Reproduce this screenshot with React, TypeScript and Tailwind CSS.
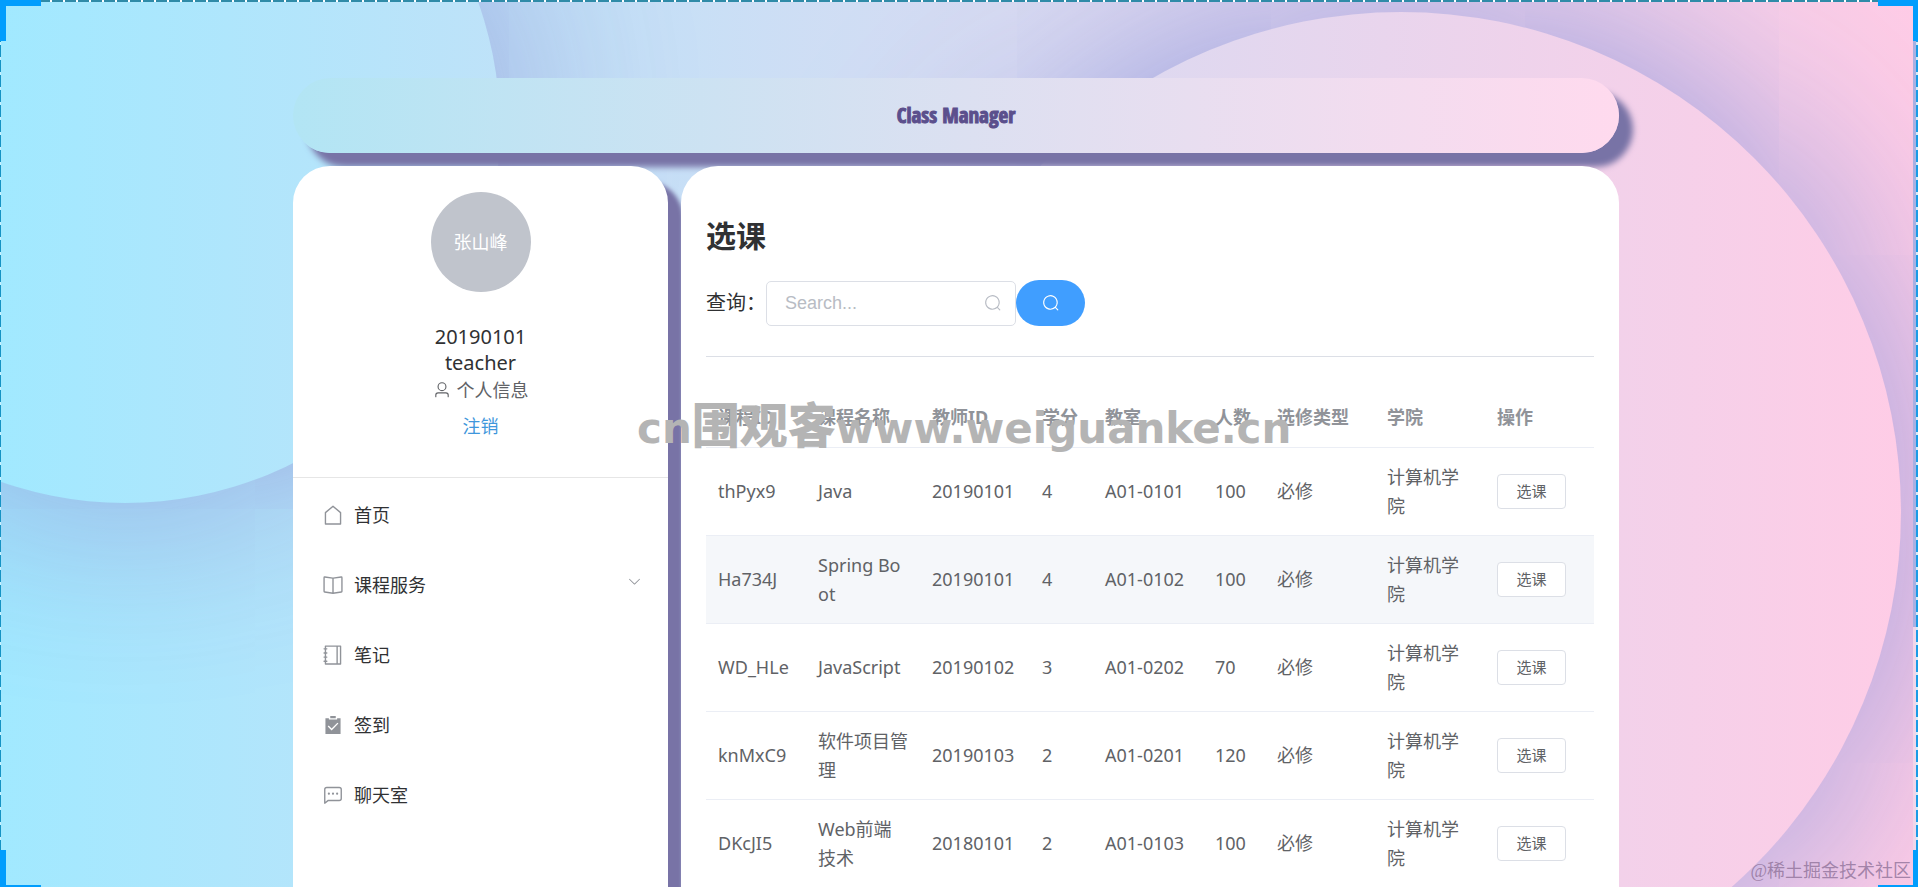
import React from "react";

const SANS = "font-['Noto_Sans','Noto_Sans_CJK_SC',sans-serif]";

const paths = {
  search:
    "M795.904 750.72l124.992 124.928a32 32 0 0 1-45.248 45.248L750.656 795.904a416 416 0 1 1 45.248-45.248zM480 832a352 352 0 1 0 0-704 352 352 0 0 0 0 704z",
  arrow:
    "M831.872 340.864 512 652.672 192.128 340.864a30.592 30.592 0 0 0-42.752 0 29.12 29.12 0 0 0 0 41.6L489.664 714.24a32 32 0 0 0 44.672 0l340.288-331.712a29.12 29.12 0 0 0 0-41.728 30.592 30.592 0 0 0-42.752 0z",
  user: "M512 512a192 192 0 1 0 0-384 192 192 0 0 0 0 384zm0 64a256 256 0 1 1 0-512 256 256 0 0 1 0 512zm320 320v-96a96 96 0 0 0-96-96H288a96 96 0 0 0-96 96v96a32 32 0 1 1-64 0v-96a160 160 0 0 1 160-160h448a160 160 0 0 1 160 160v96a32 32 0 1 1-64 0z",
  house:
    "M192 413.952V896h640V413.952L512 147.328 192 413.952zM139.52 374.4l352-293.312a32 32 0 0 1 40.96 0l352 293.312A32 32 0 0 1 896 398.976V928a32 32 0 0 1-32 32H160a32 32 0 0 1-32-32V398.976a32 32 0 0 1 11.52-24.576z",
  reading:
    "m512 863.36 384-54.848v-638.72L525.568 222.72a96 96 0 0 1-27.136 0L128 169.792v638.72l384 54.848zM137.024 106.432l370.432 52.928a32 32 0 0 0 9.088 0l370.432-52.928A64 64 0 0 1 960 169.792v638.72a64 64 0 0 1-54.976 63.36l-388.48 55.488a32 32 0 0 1-9.088 0l-388.48-55.488A64 64 0 0 1 64 808.512v-638.72a64 64 0 0 1 73.024-63.36zM480 224h64v640h-64z",
  notebook:
    "M192 128v768h640V128H192zm-32-64h704a32 32 0 0 1 32 32v832a32 32 0 0 1-32 32H160a32 32 0 0 1-32-32V96a32 32 0 0 1 32-32z M672 128h64v768h-64z M96 192h128q32 0 32 32t-32 32H96q-32 0-32-32t32-32z M96 384h128q32 0 32 32t-32 32H96q-32 0-32-32t32-32z M96 576h128q32 0 32 32t-32 32H96q-32 0-32-32t32-32z M96 768h128q32 0 32 32t-32 32H96q-32 0-32-32t32-32z",
  list: "M704 192h160v736H160V192h160v64h384v-64zM311.616 537.28l-45.312 45.248L447.36 763.52l316.8-316.8-45.312-45.184L447.36 673.024 311.616 537.28zM384 192V96h256v96H384z",
  chat: "M273.536 736H800a64 64 0 0 0 64-64V256a64 64 0 0 0-64-64H224a64 64 0 0 0-64 64v570.88L273.536 736zM296 800 147.968 918.4A32 32 0 0 1 96 893.44V256a128 128 0 0 1 128-128h576a128 128 0 0 1 128 128v416a128 128 0 0 1-128 128H296z M512 499.2a51.2 51.2 0 1 1 0-102.4 51.2 51.2 0 0 1 0 102.4zm192 0a51.2 51.2 0 1 1 0-102.4 51.2 51.2 0 0 1 0 102.4zm-384 0a51.2 51.2 0 1 1 0-102.4 51.2 51.2 0 0 1 0 102.4z",
};

type IconName = keyof typeof paths;

function Icon({ name, className }: { name: IconName; className: string }) {
  return (
    <svg
      viewBox="0 0 1024 1024"
      fill="currentColor"
      fillRule={name === "list" ? "evenodd" : "nonzero"}
      aria-hidden="true"
      className={`shrink-0 ${className}`}
    >
      <path d={paths[name]} />
    </svg>
  );
}

const menu: { icon: IconName; label: string; open?: boolean }[] = [
  { icon: "house", label: "首页" },
  { icon: "reading", label: "课程服务", open: true },
  { icon: "notebook", label: "笔记" },
  { icon: "list", label: "签到" },
  { icon: "chat", label: "聊天室" },
];

const columns = ["课程ID", "课程名称", "教师ID", "学分", "教室", "人数", "选修类型", "学院", "操作"];

const courses = [
  ["thPyx9", "Java", "20190101", "4", "A01-0101", "100", "必修", "计算机学院"],
  ["Ha734J", "Spring Boot", "20190101", "4", "A01-0102", "100", "必修", "计算机学院"],
  ["WD_HLe", "JavaScript", "20190102", "3", "A01-0202", "70", "必修", "计算机学院"],
  ["knMxC9", "软件项目管理", "20190103", "2", "A01-0201", "120", "必修", "计算机学院"],
  ["DKcJI5", "Web前端技术", "20180101", "2", "A01-0103", "100", "必修", "计算机学院"],
];

function Backdrop() {
  return (
    <div aria-hidden="true" className="absolute inset-0 overflow-hidden">
      <div className="absolute -left-[250px] -top-[247px] size-[750px] rounded-full shadow-[0_0_190px_rgba(146,150,214,0.9)]" />
      <div className="absolute -right-[-17px] top-[12px] size-[1000px] rounded-full shadow-[0_0_190px_rgba(140,150,220,0.9)]" />
    </div>
  );
}

function Frame() {
  return (
    <div aria-hidden="true" className="pointer-events-none absolute inset-0">
      <div className="absolute inset-x-0 top-0 h-[2px] bg-[repeating-linear-gradient(90deg,#2f8ba8_0_11px,#ffffff_11px_13px)]" />
      <div className="absolute inset-y-0 left-0 w-px bg-[repeating-linear-gradient(180deg,#1593c4_0_12px,#c8f2ff_12px_15px)]" />
      <div className="absolute inset-y-0 right-0 w-[5px] bg-[#f0d6ea]" />
      <div className="absolute right-0 top-0 h-[627px] w-[5px] bg-[#a9b0e2]" />
      <div className="absolute inset-y-0 right-0 w-[2px] bg-[repeating-linear-gradient(180deg,#1a9be6_0_12px,#d8eaf8_12px_15px)]" />
      <div className="absolute left-0 top-0 h-[41px] w-[41px] border-l-[6px] border-t-[6px] border-[#019dfd]" />
      <div className="absolute right-0 top-0 h-[41px] w-[40px] border-r-[5px] border-t-[6px] border-[#019dfd]" />
      <div className="absolute bottom-0 left-0 h-[37px] w-[41px] border-b-2 border-l-[6px] border-[#019dfd]" />
      <div className="absolute bottom-0 right-0 h-[37px] w-[40px] border-b-2 border-r-[5px] border-[#019dfd]" />
    </div>
  );
}

function Sidebar() {
  return (
    <aside className="w-[375px] shrink-0 rounded-t-[37px] bg-white shadow-[15px_15px_4px_#7873a6]">
      <div className="flex h-[312px] flex-col items-center border-b border-[#e6e6e6] pt-[26px]">
        <div className="flex size-[100px] items-center justify-center rounded-full bg-[#c0c4cc] text-lg text-white">
          张山峰
        </div>
        <div className="mt-8 text-center text-xl leading-[26px] text-[#303133]">
          <p>20190101</p>
          <p>teacher</p>
        </div>
        <a href="#profile" className="flex items-center gap-[6px] text-lg leading-[28px] text-[#606266]">
          <Icon name="user" className="size-[18px]" />
          个人信息
        </a>
        <a href="#logout" className="mt-2 text-lg leading-[28px] text-[#3f97dc]">
          注销
        </a>
      </div>
      <nav className="pt-[2px]">
        {menu.map((item) => (
          <a
            key={item.label}
            href="#menu"
            className="flex h-[70px] items-center gap-[10px] pl-[29px] pr-[26px] text-lg text-[#303133]"
          >
            <Icon name={item.icon} className="size-[22px] text-[#909399]" />
            {item.label}
            {item.open && <Icon name="arrow" className="mb-2 ml-auto size-[15px] text-[#909399]" />}
          </a>
        ))}
      </nav>
    </aside>
  );
}

function CourseTable() {
  return (
    <table className="mt-[30px] w-full table-fixed border-separate border-spacing-0 text-left text-lg leading-[29px] text-[#606266]">
      <colgroup>
        <col className="w-[100px]" />
        <col className="w-[114px]" />
        <col className="w-[110px]" />
        <col className="w-[63px]" />
        <col className="w-[110px]" />
        <col className="w-[62px]" />
        <col className="w-[110px]" />
        <col className="w-[110px]" />
        <col />
      </colgroup>
      <thead>
        <tr>
          {columns.map((c) => (
            <th key={c} scope="col" className="h-[61px] whitespace-nowrap border-b border-[#ebeef5] px-3 font-bold text-[#909399]">
              {c}
            </th>
          ))}
        </tr>
      </thead>
      <tbody>
        {courses.map((row, i) => (
          <tr key={row[0]} className={i === 1 ? "bg-[#f5f7fa]" : "bg-white"}>
            {row.map((cell, j) => (
              <td key={j} className="h-[88px] break-all border-b border-[#ebeef5] px-3">
                {cell}
              </td>
            ))}
            <td className="h-[88px] border-b border-[#ebeef5] px-3">
              <button
                type="button"
                className="block h-[35px] w-[69px] rounded-[4px] border border-[#dcdfe6] bg-white text-[15px] leading-none text-[#606266]"
              >
                选课
              </button>
            </td>
          </tr>
        ))}
      </tbody>
    </table>
  );
}

export default function App() {
  return (
    <div
      className={`relative h-screen overflow-hidden bg-linear-to-r from-[#a1e9ff] to-[#ffcce6] pr-[6px] ${SANS}`}
    >
      <Backdrop />
      <div className="relative mx-auto max-w-[1326px] pt-[78px]">
        <header className="flex h-[75px] items-center justify-center rounded-full bg-linear-to-r from-[#b2e5f4] to-[#ffdaee] shadow-[14px_14px_6px_#7873a6]">
          <h1 className="font-['Impact','Noto_Sans_ExtraCondensed','Noto_Sans_Condensed','Open_Sans_Condensed','Roboto_Condensed','Roboto',sans-serif] text-[21px] font-black text-[#5b4f8c] [-webkit-text-stroke:1px_#5b4f8c]">
            Class Manager
          </h1>
        </header>
        <div className="mt-[13px] flex h-[900px] gap-[13px]">
          <Sidebar />
          <main className="relative min-w-0 flex-1 rounded-t-[37px] bg-white px-[25px] pt-[50px]">
            <h2 className="text-[30px] font-bold leading-10 text-[#303133]">选课</h2>
            <form className="mt-6 flex items-center" onSubmit={(e) => e.preventDefault()}>
              <label htmlFor="query" className="w-[60px] shrink-0 whitespace-nowrap text-xl text-[#303133]">
                查询：
              </label>
              <div className="flex h-[45px] w-[250px] items-center rounded-[5px] border border-[#dcdfe6] pl-[18px] pr-[13px]">
                <input
                  id="query"
                  type="text"
                  placeholder="Search..."
                  className="w-full min-w-0 bg-transparent font-['Liberation_Sans',sans-serif] text-lg outline-none placeholder:text-[#b8bcc4]"
                />
                <Icon name="search" className="size-[18px] text-[#b8bcc4]" />
              </div>
              <button
                type="submit"
                aria-label="搜索"
                className="flex h-[46px] w-[69px] items-center justify-center rounded-full bg-[#409eff] text-white"
              >
                <Icon name="search" className="size-[18px]" />
              </button>
            </form>
            <hr className="mt-[30px] border-[#dcdfe6]" />
            <CourseTable />
          </main>
        </div>
      </div>
      <p className="pointer-events-none absolute left-[637px] top-[398px] flex items-baseline whitespace-nowrap font-['DejaVu_Sans','Noto_Sans_CJK_SC',sans-serif] text-[42px] font-bold leading-[56px] text-[#b4b4b4]">
        cn<span className="text-[48px] font-black">围观客</span>www.weiguanke.cn
      </p>
      <p className="pointer-events-none absolute bottom-[3px] right-[7px] font-['Liberation_Serif','Noto_Sans_CJK_SC',serif] text-lg leading-[26px] text-[#8f7299]/80">
        @稀土掘金技术社区
      </p>
      <Frame />
    </div>
  );
}
